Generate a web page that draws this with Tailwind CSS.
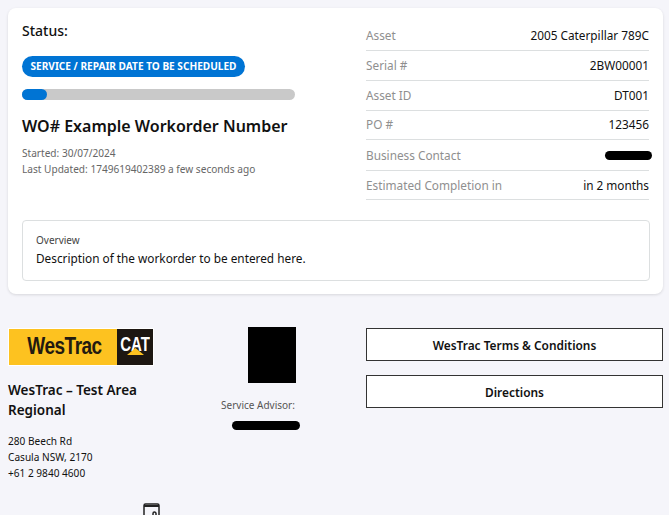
<!DOCTYPE html>
<html lang="en">
<head>
    <meta charset="UTF-8">
    <meta name="viewport" content="width=device-width, initial-scale=1.0">
    <title>Workorder Status</title>
    <script src="https://cdn.jsdelivr.net/npm/@tailwindcss/browser@4"></script>
</head>
<body class="bg-[#f5f5fa] h-[515px] overflow-hidden font-['Noto_Sans',sans-serif] text-[#111]">
    <!-- workorder card -->
    <div class="mx-2 mt-2 w-[655px] h-[286px] bg-white rounded-lg shadow-[0_1px_3px_rgba(0,0,0,0.12)] px-[14px] pt-[14px]">
        <div class="flex h-[198px]">
            <div class="w-[344px] shrink-0">
                <h2 class="text-[14px] leading-[18px] font-medium">Status:</h2>
                <div class="mt-[16px] w-[223px] h-[21px] rounded-full bg-[#0074d4] text-white text-[10.1px] leading-[21px] font-bold text-center whitespace-nowrap">SERVICE / REPAIR DATE TO BE SCHEDULED</div>
                <div class="mt-[12px] w-[273px] h-[11px] rounded-full bg-[#c9c9c9]">
                    <div class="w-[25px] h-[11px] rounded-full bg-[#0074d4]"></div>
                </div>
                <h1 class="mt-[14px] text-[16px] leading-[24px] font-semibold whitespace-nowrap">WO# Example Workorder Number</h1>
                <div class="mt-[7px] text-[10.1px] leading-[16px] text-[#666] whitespace-nowrap">
                    <p>Started: 30/07/2024</p>
                    <p>Last Updated: 1749619402389 a few seconds ago</p>
                </div>
            </div>
            <div class="w-[283px] -mt-[1px] text-[11.8px]">
                <div class="flex justify-between items-center h-[30px] border-b border-[#dcdfe0]"><span class="text-[#8f8f8f]">Asset</span><span>2005 Caterpillar 789C</span></div>
                <div class="flex justify-between items-center h-[30px] border-b border-[#dcdfe0]"><span class="text-[#8f8f8f]">Serial #</span><span>2BW00001</span></div>
                <div class="flex justify-between items-center h-[30px] border-b border-[#dcdfe0]"><span class="text-[#8f8f8f]">Asset ID</span><span>DT001</span></div>
                <div class="flex justify-between items-center h-[29px] border-b border-[#dcdfe0]"><span class="text-[#8f8f8f]">PO #</span><span>123456</span></div>
                <div class="flex justify-between items-center h-[31px] pt-[1px] border-b border-[#dcdfe0]"><span class="text-[#8f8f8f]">Business Contact</span><span class="w-[47px] h-[9px] -mr-[3px] rounded-full bg-black"></span></div>
                <div class="flex justify-between items-center h-[29px] pt-[1px] border-b border-[#dcdfe0]"><span class="text-[#8f8f8f]">Estimated Completion in</span><span>in 2 months</span></div>
            </div>
        </div>
        <div class="w-[628px] h-[61px] border border-[#dcdfe0] rounded px-[13px] pt-[12px]">
            <p class="text-[10px] leading-[14px] text-[#444]">Overview</p>
            <p class="mt-[2px] text-[11.8px] leading-[18px]">Description of the workorder to be entered here.</p>
        </div>
    </div>

    <!-- branch details -->
    <div class="flex mt-[33px] px-2">
        <div class="w-[165px] shrink-0 relative">
            <div class="flex w-[146px] h-[38px] mt-[1px] border border-white">
                <div class="w-[108px] bg-[#fdc220] flex items-center justify-center pl-[3px]">
                    <span class="font-['Liberation_Sans',sans-serif] font-bold text-[19px] tracking-[-0.5px] text-[#231a10] scale-y-125">WesTrac</span>
                </div>
                <div class="flex-1 bg-[#1d1712] relative flex justify-center">
                    <span class="font-['Liberation_Sans',sans-serif] font-bold text-[15px] leading-[31px] text-white scale-y-[1.4]">CAT</span>
                    <svg class="absolute left-[10px] top-[19px]" width="17" height="7" viewBox="0 0 17 7"><polygon points="8.5,0 17,7 0,7" fill="#fdc220"/></svg>
                </div>
            </div>
            <h3 class="mt-[14px] text-[13.5px] leading-[20px] font-semibold">WesTrac – Test Area Regional</h3>
            <div class="mt-[13px] text-[10.1px] leading-[16px]">
                <p>280 Beech Rd</p>
                <p>Casula NSW, 2170</p>
                <p>+61 2 9840 4600</p>
            </div>
            <svg class="absolute left-[134px] top-[176px]" width="20" height="20" viewBox="0 0 20 20" fill="none" stroke="#222" stroke-width="1.5"><rect x="2" y="1" width="15" height="18" rx="1.5"/><path d="M2 3h15" stroke-width="2"/><path d="M11 14v-3.5a1.5 1.5 0 0 1 3 0V14"/></svg>
        </div>
        <div class="w-[192px] shrink-0 flex flex-col items-center">
            <div class="w-[48px] h-[56px] bg-black ml-[6px]"></div>
            <p class="mt-[15px] -ml-[22px] text-[10px] leading-[14px] text-[#555]">Service Advisor:</p>
            <div class="mt-[9px] -ml-[7px] w-[68px] h-[9px] rounded-full bg-black"></div>
        </div>
        <div class="flex-1 flex flex-col gap-[14px] mt-[1px] pl-[1px]">
            <a class="block w-[297px] h-[33px] border border-[#333] bg-white text-center text-[11.9px] leading-[32px] font-semibold">WesTrac Terms &amp; Conditions</a>
            <a class="block w-[297px] h-[33px] border border-[#333] bg-white text-center text-[11.9px] leading-[32px] font-semibold">Directions</a>
        </div>
    </div>
</body>
</html>
